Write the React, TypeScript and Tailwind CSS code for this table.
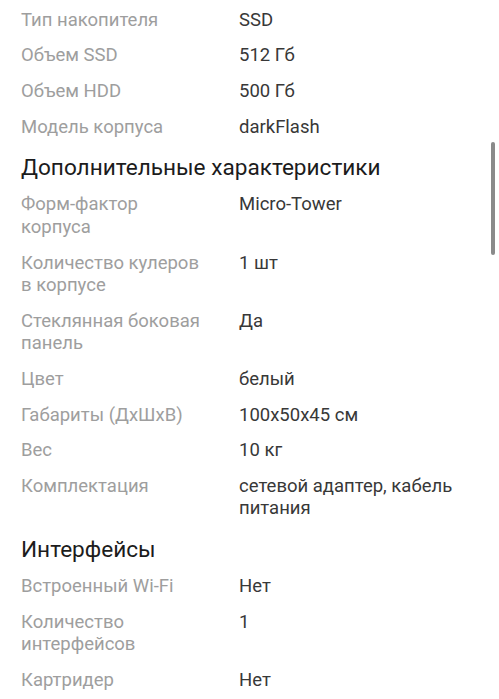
import React from "react";

type Spec = { label: string; value: string };

const storage: Spec[] = [
    { label: "Тип накопителя", value: "SSD" },
    { label: "Объем SSD", value: "512 Гб" },
    { label: "Объем HDD", value: "500 Гб" },
    { label: "Модель корпуса", value: "darkFlash" },
];

const extra: Spec[] = [
    { label: "Форм-фактор корпуса", value: "Micro-Tower" },
    { label: "Количество кулеров в корпусе", value: "1 шт" },
    { label: "Стеклянная боковая панель", value: "Да" },
    { label: "Цвет", value: "белый" },
    { label: "Габариты (ДхШхВ)", value: "100x50x45 см" },
    { label: "Вес", value: "10 кг" },
    { label: "Комплектация", value: "сетевой адаптер, кабель питания" },
];

const interfaces: Spec[] = [
    { label: "Встроенный Wi-Fi", value: "Нет" },
    { label: "Количество интерфейсов", value: "1" },
    { label: "Картридер", value: "Нет" },
];

function SpecRow({ label, value }: Spec) {
    return (
        <div className="flex py-[6.6px] text-[18.5px] leading-[22.5px]">
            <div className="w-[218px] shrink-0 pr-[30px] text-[#9e9e9e]">{label}</div>
            <div className="flex-1 pr-6 text-[#383838]">{value}</div>
        </div>
    );
}

function Section({ title, items }: { title: string; items: Spec[] }) {
    return (
        <section>
            <h2 className="pt-[9px] pb-[5px] text-[22.6px] leading-[28px] text-[#1c1c1c]">{title}</h2>
            {items.map((s) => (
                <SpecRow key={s.label} {...s} />
            ))}
        </section>
    );
}

export default function App() {
    return (
        <div
            className="relative h-[699px] w-[499px] overflow-hidden bg-white pl-[21px] pt-[2px]"
            style={{ fontFamily: "Roboto, 'Noto Sans', sans-serif" }}
        >
            {storage.map((s) => (
                <SpecRow key={s.label} {...s} />
            ))}
            <Section title="Дополнительные характеристики" items={extra} />
            <Section title="Интерфейсы" items={interfaces} />

            {/* scroll indicator */}
            <div className="absolute right-[4px] top-[142px] h-[113px] w-[4px] rounded-full bg-[#8a8a8a]" />
        </div>
    );
}
